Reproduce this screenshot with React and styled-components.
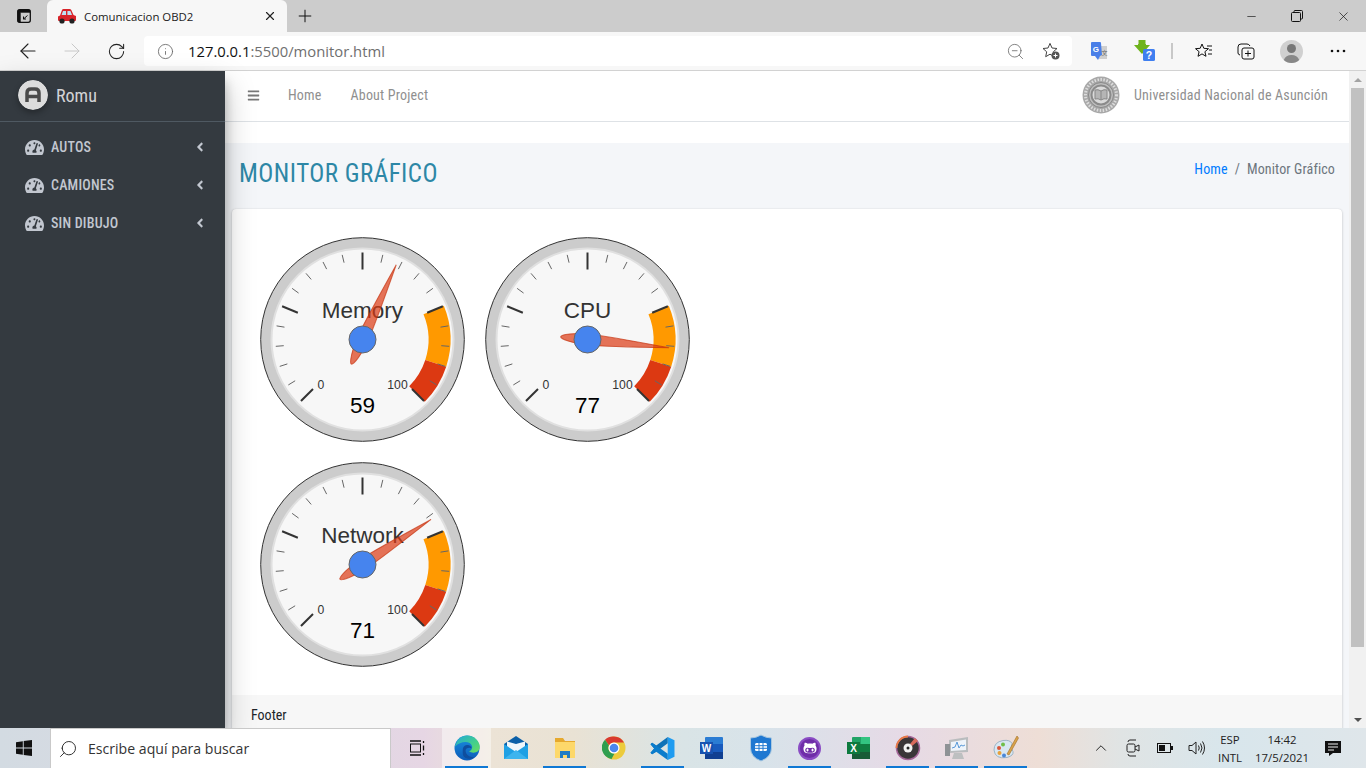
import React from "react";
import styled, { createGlobalStyle } from "styled-components";
import { FaTachometerAlt, FaAngleLeft, FaBars, FaGithubAlt } from "react-icons/fa";
import { ArrowLeft, ArrowRight, RotateCw, Info, ZoomOut, Plus, X, Minus, ChevronUp, Search } from "lucide-react";

const Global = createGlobalStyle`
  html, body { margin: 0; padding: 0; height: 100%; overflow: hidden; background: #fff; }
  #root { height: 100%; }
  * { box-sizing: border-box; }
`;

const cond = `font-family: Roboto, "Liberation Sans", sans-serif; font-stretch: 75%;`;

const Screen = styled.div`
  width: 1366px; height: 768px; display: flex; flex-direction: column; overflow: hidden;
  font-family: "Open Sans", sans-serif;
`;

/* browser chrome */
const TabStrip = styled.div`
  height: 32px; background: #cccccc; display: flex; align-items: stretch; flex: none;
`;
const TabActions = styled.div`
  width: 47px; display: flex; align-items: center; justify-content: center;
`;
const Tab = styled.div`
  width: 240px; background: #f7f7f7; border-radius: 6px 6px 0 0; display: flex; align-items: center;
  padding: 0 10px 0 10px; gap: 7px; font-size: 11.4px; color: #222;
`;
const TabTitle = styled.span` flex: 1; white-space: nowrap; `;
const NewTab = styled.div`
  width: 36px; display: flex; align-items: center; justify-content: center;
`;
const WindowControls = styled.div`
  margin-left: auto; display: flex; align-items: center;
`;
const WinBtn = styled.div`
  width: 46px; height: 30px; display: flex; align-items: center; justify-content: center; color: #111;
`;
const Toolbar = styled.div`
  height: 39px; background: #f7f7f7; border-bottom: 1px solid #d2d2d2; display: flex; align-items: center; flex: none;
  padding: 0 0 0 6px;
`;
const NavBtn = styled.div`
  width: 44px; height: 32px; display: flex; align-items: center; justify-content: center;
  color: ${(p) => (p.$off ? "#c8c8c8" : "#222")};
`;
const Address = styled.div`
  margin-left: 6px; width: 928px; height: 30px; background: #fff; border-radius: 4px; display: flex; align-items: center;
  padding: 0 3px 0 13px; font-family: "Open Sans", sans-serif; font-size: 14.8px; color: #111;
`;
const Url = styled.span`
  margin-left: 14px; flex: 1;
  em { font-style: normal; color: #6f6f6f; }
`;
const AddrIcon = styled.span`
  display: flex; align-items: center; justify-content: center; width: 36px; color: #666;
`;
const Extensions = styled.div`
  display: flex; align-items: center; flex: 1; padding-left: 3px;
`;
const Ext = styled.div`
  width: ${(p) => p.$w || 46}px; display: flex; align-items: center; justify-content: center; color: #111;
`;
const Sep = styled.div` width: 2px; height: 16px; background: #c8c8c8; margin: 0 11px 0 4px; `;

/* page */
const Page = styled.div` flex: 1; display: flex; min-height: 0; `;
const Sidebar = styled.aside`
  width: 225px; flex: none; background: #343a40; position: relative; z-index: 2;
  box-shadow: 0 14px 28px rgba(0,0,0,.25), 0 10px 10px rgba(0,0,0,.22);
  ${cond}
`;
const Brand = styled.div`
  height: 51px; border-bottom: 1px solid #4f5962; display: flex; align-items: center; padding: 0 0 1px 18px; gap: 8px;
  color: rgba(255,255,255,.8); font-size: 18px; font-weight: 400;
`;
const BrandLogo = styled.svg`
  width: 30px; height: 30px; border-radius: 50%; box-shadow: 0 3px 6px rgba(0,0,0,.3); flex: none; margin-bottom: 1px;
`;
const Menu = styled.nav` padding-top: 6px; `;
const MenuItem = styled.div`
  height: 38px; display: flex; align-items: center; padding: 0 18px 0 25px; color: #c2c7d0;
  font-size: 14px; font-weight: 500; letter-spacing: .2px;
  span { margin-left: 7px; flex: 1; }
`;
const Main = styled.main`
  flex: 1; min-width: 0; display: flex; flex-direction: column; background: #fff; overflow: hidden; ${cond}
`;
const Navbar = styled.header`
  height: 51px; flex: none; border-bottom: 1px solid #dee2e6; display: flex; align-items: center; padding: 0 21px 2px 22px;
  font-size: 14px; color: #8f8f8f; letter-spacing: .18px;
`;
const Burger = styled.span` display: flex; color: #777; margin-right: 28px; `;
const NavLink = styled.a` margin-right: 29px; `;
const Uni = styled.div` margin-left: auto; display: flex; align-items: center; gap: 14px; `;
const Content = styled.div`
  margin-top: 21px; flex: 1; min-height: 0; background: #f4f6f9; overflow: hidden;
`;
const PageHead = styled.div`
  height: 66px; display: flex; justify-content: space-between; align-items: center; padding: 0 14px 6px 14px;
`;
const Title = styled.h1`
  margin: 0; font-size: 25px; font-weight: 400; color: #2d87a6; letter-spacing: .47px;
`;
const Crumbs = styled.div`
  font-size: 14px; color: #6c757d; display: flex; gap: 7px; margin-top: -8px; letter-spacing: .12px;
  a { color: #007bff; }
`;
const Card = styled.section`
  margin: 0 7px; background: #fff; border-radius: 4px 4px 0 0; box-shadow: 0 0 1px rgba(0,0,0,.125), 0 1px 3px rgba(0,0,0,.2);
`;
const CardBody = styled.div`
  height: 486px; padding: 17.5px 17.5px 0;
`;
const GaugeGrid = styled.div`
  display: grid; grid-template-columns: repeat(2, 225px); grid-template-rows: repeat(2, 225px);
`;
const CardFooter = styled.div`
  height: 60px; background: #f7f7f7; padding: 12px 19px; font-size: 14px; color: #212529;
`;
const Scrollbar = styled.div`
  width: 17px; flex: none; background: #f1f1f1; display: flex; flex-direction: column; align-items: center; padding: 0 2px;
`;
const ScrollArrow = styled.div`
  height: 17px; flex: none; width: 100%; display: flex; align-items: center; justify-content: center;
  &::before {
    content: ""; border-left: 4px solid transparent; border-right: 4px solid transparent;
    ${(p) => (p.$down ? "border-top: 4px solid #505050;" : "border-bottom: 4px solid #a3a3a3;")}
  }
`;
const Thumb = styled.div` width: 100%; height: 559px; background: #c1c1c1; `;
const ScrollGap = styled.div` flex: 1; `;

/* taskbar */
const Taskbar = styled.footer`
  height: 40px; flex: none; display: flex; align-items: stretch; position: relative; z-index: 3;
  background: linear-gradient(90deg, #d3dbe2 0%, #dcd8e2 22%, #e6d6e4 31%, #ece3d6 36%, #e9e2d4 42%, #d9e4e6 50%, #d8e3ea 56%, #e6dae6 66%, #eeded6 76%, #e0e4e4 82%, #d8e6ec 90%, #dfe6ea 100%);
`;
const StartBtn = styled.div` width: 50px; display: flex; align-items: center; justify-content: center; padding-right: 2px; `;
const SearchBox = styled.div`
  width: 341px; background: #fff; display: flex; align-items: center; padding-left: 7px; gap: 10px;
  font-size: 14.1px; font-family: "Open Sans", sans-serif; color: #333; border: 1px solid #c9c9c9; border-width: 1px 1px 0;
`;
const MirrorIcon = styled.span` display: flex; transform: scaleX(-1); `;
const TaskView = styled.div` width: 51px; display: flex; align-items: center; justify-content: center; `;
const TaskIcon = styled.div`
  width: 49px; display: flex; align-items: center; justify-content: center; position: relative;
  background: ${(p) => (p.$focus ? "rgba(255,255,255,.45)" : "transparent")};
  &::after {
    content: ""; position: absolute; left: 3px; right: 3px; bottom: 0; height: 2px;
    background: ${(p) => (p.$open ? "#0f78d4" : "transparent")};
  }
`;
const Tray = styled.div`
  margin-left: auto; display: flex; align-items: center; color: #222; padding-right: 17px;
`;
const TrayIcon = styled.div` width: 32px; display: flex; align-items: center; justify-content: center; `;
const TrayText = styled.div`
  display: flex; flex-direction: column; align-items: center; gap: 3px; font-size: 11.4px; line-height: 15px; color: #222;
  font-family: "Open Sans", sans-serif; width: ${(p) => p.$w}px;
`;
const Notify = styled.div` width: 32px; display: flex; justify-content: center; `;

/* gauge */
const polar = (r, deg) => {
  const a = ((deg - 90) * Math.PI) / 180;
  return [112.5 + r * Math.cos(a), 112.5 + r * Math.sin(a)];
};
const angle = (v) => -135 + 2.7 * v;
const sector = (a, b, r1, r2) => {
  const [x1, y1] = polar(r2, a), [x2, y2] = polar(r2, b), [x3, y3] = polar(r1, b), [x4, y4] = polar(r1, a);
  return `M${x1} ${y1}A${r2} ${r2} 0 0 1 ${x2} ${y2}L${x3} ${y3}A${r1} ${r1} 0 0 0 ${x4} ${y4}Z`;
};
const GaugeSvg = styled.svg` display: block; width: 225px; height: 225px; font-family: "Liberation Sans", Arial, sans-serif; `;

function Gauge({ label, value, needle }) {
  const ticks = [];
  for (let i = 0; i <= 20; i++) {
    const major = i % 5 === 0;
    const d = angle(i * 5);
    const [x1, y1] = polar(major ? 70 : 79, d), [x2, y2] = polar(87, d);
    ticks.push(<line key={i} x1={x1} y1={y1} x2={x2} y2={y2} stroke={major ? "#333" : "#666"} strokeWidth={major ? 2 : 1} />);
  }
  return (
    <GaugeSvg viewBox="0 0 225 225">
      <circle cx="112.5" cy="112.5" r="101.8" fill="#ccc" stroke="#333" strokeWidth="1" />
      <circle cx="112.5" cy="112.5" r="91" fill="#f7f7f7" stroke="#e0e0e0" strokeWidth="2" />
      <path d={sector(angle(75), angle(90), 66, 88)} fill="#ff9900" />
      <path d={sector(angle(90), angle(100), 66, 88)} fill="#dc3912" />
      {ticks}
      <text x="112.5" y="90.5" textAnchor="middle" fontSize="22.5" fill="#333">{label}</text>
      <text x="71" y="162" textAnchor="middle" fontSize="12.2" fill="#333">0</text>
      <text x="147.5" y="162" textAnchor="middle" fontSize="12.2" fill="#333">100</text>
      <text x="112.5" y="185.5" textAnchor="middle" fontSize="22.5" fill="#000">{value}</text>
      <g transform={`rotate(${angle(needle)} 112.5 112.5)`}>
        <path d="M112.5 30.5C115 60 118 100 118 112.5C118 125 115 139.500 112.5 139.500C110 139.500 107 125 107 112.5C107 100 110 60 112.5 30.5Z" fill="#dc3912" fillOpacity=".7" stroke="#c63310" strokeWidth="1" strokeOpacity=".7" />
      </g>
      <circle cx="112.5" cy="112.5" r="13.5" fill="#4684ee" stroke="#666" strokeWidth="1" />
    </GaugeSvg>
  );
}

const Car = () => (
  <svg width="20" height="18" viewBox="0 0 20 18">
    <path d="M1 13V9.500l2-1 2-5.500q.4-1 1.500-1h6q1.200 0 1.800 1l2.200 5 2.500 1V13q0 1-1 1H2q-1 0-1-1Z" fill="#d8232a" />
    <path d="M6 4h3v4H4.600ZM10.400 4h3l1.600 4h-4.600Z" fill="#bfe0f2" />
    <circle cx="5" cy="14" r="2.600" fill="#222" /><circle cx="15" cy="14" r="2.600" fill="#222" />
  </svg>
);
const TabsIcon = () => (
  <svg width="16" height="16" viewBox="0 0 16 16" fill="none" stroke="#111" strokeWidth="1.300">
    <rect x="1.700" y="1.700" width="12.600" height="12.600" rx="2" />
    <path d="M2 2h12v2.500H4.500V14H2Z" fill="#111" strokeWidth=".4" />
    <path d="M11.500 7.500 7.500 11M7.500 8.500V11H10" strokeWidth="1" />
  </svg>
);
const RestoreIcon = () => (
  <svg width="12" height="12" viewBox="0 0 12 12" fill="none" stroke="#111"><rect x=".5" y="2.500" width="9" height="9" rx="1" /><path d="M3 2.500V1.500q0-1 1-1h6.500q1 0 1 1V8q0 1-1 1h-1" /></svg>
);
const StarPlus = () => (
  <svg width="20" height="20" viewBox="0 0 20 20"><path d="M9 2.400 11 7l5 .5-3.700 3.300 1 4.900L9 13.200 4.700 15.700l1-4.900L2 7.500 7 7Z" fill="none" stroke="#444" /><circle cx="14.500" cy="14.500" r="4" fill="#555" /><path d="M12.500 14.500h4M14.500 12.500v4" stroke="#fff" /></svg>
);
const Translate = () => (
  <svg width="18" height="20" viewBox="0 0 18 20"><path d="M8 5h9v13H9Z" fill="#cfcfcf" /><path d="M1 2q0-1 1-1h8q1 0 1 1l1 12-2 1-2 4-3-4H2q-1 0-1-1Z" fill="#4a7fe8" /><text x="2.800" y="11" fontSize="8" fontWeight="700" fill="#fff" fontFamily="Liberation Sans">G</text><text x="11.500" y="14" fontSize="6" fill="#666" fontFamily="Noto Sans CJK SC">文</text></svg>
);
const Download = () => (
  <svg width="24" height="24" viewBox="0 0 24 24"><path d="M1 6h4V1h8v5h4l-8 9Z" fill="#6fb31c" /><path d="M5 1v4M13 1v4" stroke="#f7f7f7" strokeWidth="1" /><rect x="10" y="10" width="12" height="12" rx="1.500" fill="#3f7ff0" /><text x="16" y="20" textAnchor="middle" fontSize="10.500" fontWeight="700" fill="#fff" fontFamily="Liberation Sans">?</text></svg>
);
const Favorites = () => (
  <svg width="20" height="20" viewBox="0 0 20 20" fill="none" stroke="#111"><path d="M8 3l1.800 4.300 4.700.4-3.600 3 1.100 4.600L8 12.900l-4 2.400 1.100-4.600-3.600-3 4.700-.4Z" /><path d="M13 5h5M15 9h3M14 13h4" /></svg>
);
const Collections = () => (
  <svg width="20" height="20" viewBox="0 0 20 20" fill="none" stroke="#111"><path d="M4 14q-2-.5-2-2V6q0-3 3-3h6q2 0 3 2" /><rect x="6" y="7" width="12" height="11" rx="2" /><path d="M12 9.500v6M9 12.500h6" /></svg>
);
const Avatar = () => (
  <svg width="23" height="23" viewBox="0 0 23 23"><circle cx="11.500" cy="11.500" r="11.500" fill="#d0d0d0" /><circle cx="11.500" cy="8.500" r="4.500" fill="#777" /><path d="M3.800 20q2-5 7.700-5t7.700 5q-3 3-7.700 3t-7.700-3Z" fill="#888" /></svg>
);
const Dots = () => (
  <svg width="16" height="4" viewBox="0 0 16 4" fill="#111"><circle cx="2" cy="2" r="1.300" /><circle cx="8" cy="2" r="1.300" /><circle cx="14" cy="2" r="1.300" /></svg>
);
const Seal = () => (
  <svg width="38" height="38" viewBox="0 0 38 38">
    <circle cx="19" cy="19" r="18.500" fill="#a8a8a8" />
    <circle cx="19" cy="19" r="15.500" fill="none" stroke="#dcdcdc" strokeWidth="3" strokeDasharray="1.500 1.500" />
    <circle cx="19" cy="19" r="12.500" fill="#bcbcbc" stroke="#888" />
    <circle cx="19" cy="19" r="9.500" fill="#dadada" stroke="#8a8a8a" strokeWidth="2" />
    <path d="M13 14q3-1 6 1 3-2 6-1v9q-3-1-6 1-3-2-6-1ZM19 15v9" fill="#b5b5b5" stroke="#888" />
  </svg>
);

const WinLogo = () => (
  <svg width="16" height="16" viewBox="0 0 16 16" fill="#111"><path d="M0 2.200 6.800 1.200V7.500H0ZM7.700 1.100 16 0V7.500H7.700ZM0 8.400H6.800V14.800L0 13.800ZM7.700 8.400H16V16L7.700 14.900Z" /></svg>
);
const TaskViewIcon = () => (
  <svg width="16" height="18" viewBox="0 0 16 18" fill="none" stroke="#111"><rect x="1.500" y="5" width="10" height="8" /><path d="M1 2h11M1 16h11M14.500 2v2M14.500 6.500v5M14.500 14v2" strokeWidth="1.300" /></svg>
);
const Edge = () => (
  <svg width="26" height="26" viewBox="0 0 26 26">
    <defs>
      <linearGradient id="eg1" x1="0" y1="0" x2="1" y2="1"><stop offset="0" stopColor="#22a8d8" /><stop offset=".6" stopColor="#43cf8c" /><stop offset="1" stopColor="#6bdc5e" /></linearGradient>
      <linearGradient id="eg2" x1="0" y1="0" x2="0" y2="1"><stop offset="0" stopColor="#1a90e0" /><stop offset="1" stopColor="#0c5bb8" /></linearGradient>
    </defs>
    <circle cx="13" cy="13" r="12.500" fill="url(#eg2)" />
    <path d="M1 11Q4 .5 13 .5q9 0 12.500 9 1 6-3 7.500-4 1.500-7.500-.5 4-2 3-5.500-1.500-4-6.500-4-6 0-10.500 4.500Z" fill="url(#eg1)" />
    <path d="M9 13q1.500-3.500 5-3 3.500.8 3.500 3.500-1.500-1-3.500-.5-3.500.8-2 5 2 4 8.500 4.500-3 1.800-6.500 1.200-5.500-1-5.300-6.500 0-2.500.3-4.200Z" fill="#0f4e9e" />
  </svg>
);
const Mail = () => (
  <svg width="26" height="26" viewBox="0 0 26 26"><path d="M1 9 13 1l12 8v15H1Z" fill="#0a5fa8" /><path d="M4 6.500 13 9l9-2.500V16H4Z" fill="#eef6fb" /><path d="M1 9l12 8 12-8v15H1Z" fill="#1fa0e4" /><path d="M1 24 13 15l12 9Z" fill="#3db4ee" /></svg>
);
const Folder = () => (
  <svg width="24" height="24" viewBox="0 0 24 24"><path d="M2 2h8l2 3h10v17H2Z" fill="#e6a92e" /><path d="M2 6h20v16H2Z" fill="#fdd86a" /><path d="M7 15h10v7h-3v-3h-4v3H7Z" fill="#1f7cc4" /></svg>
);
const Chrome = () => (
  <svg width="24" height="26" viewBox="0 0 24 24"><circle cx="12" cy="12" r="11.500" fill="#eccb3c" /><path d="M12 .5A11.500 11.500 0 0 1 22 6.500H12a5.500 5.500 0 0 0-5 3L3 3.700A11.500 11.500 0 0 1 12 .5Z" fill="#d93a2f" /><path d="M3 3.700 7 9.500a5.500 5.500 0 0 0 5.500 8L9.500 23A11.500 11.500 0 0 1 3 3.700Z" fill="#2f9e4f" /><circle cx="12" cy="12" r="5.500" fill="#fff" /><circle cx="12" cy="12" r="4.300" fill="#4a87ec" /></svg>
);
const VSCode = () => (
  <svg width="25" height="25" viewBox="0 0 24 24"><path d="M17 1 23.500 4v16L17 23Z" fill="#1f9cf0" /><path d="M17 1v6L6 15l-4 2.500L.5 16 4 12 .5 8 2 6.500 6 9Z" fill="#0e72b8" /><path d="M17 23v-6L6 9 2 6.500.5 8 4 12 .5 16 2 17.500 6 15Z" fill="#0a7ccc" /></svg>
);
const Word = () => (
  <svg width="25" height="24" viewBox="0 0 25 24"><rect x="6" y="1" width="18" height="22" rx="1" fill="#2b7cd3" /><path d="M6 8h18v8H6Z" fill="#185abd" /><path d="M6 16h18v7H6Z" fill="#103f91" /><rect x="1" y="6" width="13" height="12" fill="#1752b0" /><text x="7.500" y="16" textAnchor="middle" fontSize="10" fontWeight="700" fill="#fff" fontFamily="Liberation Sans">W</text></svg>
);
const Shield = () => (
  <svg width="24" height="28" viewBox="0 0 24 28"><path d="M12 1q5 3 10.500 3v10q0 9-10.500 13Q1.500 23 1.500 14V4Q7 4 12 1Z" fill="#1f78d1" stroke="#a9c8e0" /><rect x="6" y="9" width="12" height="8" rx="1.500" fill="#fff" /><path d="M6 11.700h12M6 14.300h12M10 9v8M14 9v8" stroke="#1f78d1" /></svg>
);
const GhCircle = styled.span`
  width: 23px; height: 23px; border-radius: 50%; background: #6f2da8; border: 2px solid #8a4cc4; display: flex; align-items: center; justify-content: center;
`;
const GithubDesk = () => (
  <GhCircle><FaGithubAlt size={14} color="#fff" /></GhCircle>
);
const Excel = () => (
  <svg width="25" height="24" viewBox="0 0 25 24"><rect x="6" y="1" width="18" height="22" rx="1" fill="#21a366" /><path d="M15 1h9v7h-9Z" fill="#33c481" /><path d="M6 8h18v8H6Z" fill="#107c41" /><path d="M6 16h18v7H6Z" fill="#185c37" /><rect x="1" y="6" width="13" height="12" fill="#0e7a3e" /><text x="7.500" y="16" textAnchor="middle" fontSize="10" fontWeight="700" fill="#fff" fontFamily="Liberation Sans">X</text></svg>
);
const Music = () => (
  <svg width="26" height="26" viewBox="0 0 26 26"><circle cx="13" cy="13" r="11.500" fill="#3a3638" stroke="#a5679a" strokeWidth="1.500" /><path d="M13 1.500a11.500 11.500 0 0 0-11.500 11.500" fill="none" stroke="#e87a45" strokeWidth="1.800" /><path d="M20 3 15 9l2 2 6-5Z" fill="#d96b5c" /><circle cx="13" cy="13" r="4.500" fill="#f2f2f2" /><circle cx="13" cy="13" r="1.500" fill="#222" /></svg>
);
const Monitor = () => (
  <svg width="26" height="26" viewBox="0 0 26 26"><path d="M5 5l19-3v15L5 18Z" fill="#b9bcbe" /><path d="M7 7l15-2.500v10.500L7 16Z" fill="#eef4fa" /><path d="M8 13l3-1 2-5 2 6 2-3 2 1 2-1" fill="none" stroke="#5a9ad8" /><path d="M10 18h8l2 6H8Z" fill="#bdbfc0" /><rect x="1" y="9" width="5" height="12" fill="#8e9295" /></svg>
);
const Paint = () => (
  <svg width="28" height="28" viewBox="0 0 28 28"><path d="M2 16q0-8 9-9.500 7-1 9 3-2 5 1 8 1 4-6 6-12 2-13-7.500Z" fill="#d8e7f2" stroke="#9db4c6" /><circle cx="7" cy="14" r="2" fill="#d8553a" /><circle cx="11" cy="10.500" r="2" fill="#6fbf4a" /><circle cx="7.500" cy="19" r="2" fill="#e8a03a" /><circle cx="12" cy="21.500" r="2" fill="#4a87d8" /><path d="M25 2 15 20l2 1L26.500 4Z" fill="#d9a24a" stroke="#a06e28" strokeWidth=".6" /></svg>
);
const MeetNow = () => (
  <svg width="16" height="20" viewBox="0 0 16 20" fill="none" stroke="#222"><path d="M3 4q0-2 2-2h6M3 16q0 2 2 2h6" /><rect x="2" y="6" width="8" height="8" rx="1.500" /><path d="M10 9l4-2v6l-4-2" /></svg>
);
const Battery = () => (
  <svg width="16" height="10" viewBox="0 0 16 10"><rect x=".5" y=".5" width="13" height="9" fill="none" stroke="#111" /><rect x="2" y="2" width="6" height="6" fill="#111" /><rect x="14" y="3" width="2" height="4" fill="#111" /></svg>
);
const Volume = () => (
  <svg width="18" height="16" viewBox="0 0 18 16" fill="none" stroke="#222"><path d="M1 5.500h3L8 2v12l-4-3.500H1Z" /><path d="M10.500 5.500q1.500 2.500 0 5M12.500 3.500q3 4.500 0 9M14.500 1.500q4 6.500 0 13" /></svg>
);
const NotifyIcon = () => (
  <svg width="16" height="16" viewBox="0 0 16 16"><path d="M0 1h16v12H8l-4 3v-3H0Z" fill="#111" /><path d="M3 4h10M3 7h10M3 10h6" stroke="#eee" /></svg>
);

export default function App() {
  return (
    <Screen>
      <Global />
      <TabStrip>
        <TabActions><TabsIcon /></TabActions>
        <Tab>
          <Car />
          <TabTitle>Comunicacion OBD2</TabTitle>
          <X size={14} color="#222" strokeWidth={2} />
        </Tab>
        <NewTab><Plus size={20} color="#111" strokeWidth={1.2} /></NewTab>
        <WindowControls>
          <WinBtn><Minus size={13} strokeWidth={1.2} /></WinBtn>
          <WinBtn><RestoreIcon /></WinBtn>
          <WinBtn><X size={15} strokeWidth={1.1} /></WinBtn>
        </WindowControls>
      </TabStrip>
      <Toolbar>
        <NavBtn><ArrowLeft size={24} strokeWidth={1.1} /></NavBtn>
        <NavBtn $off><ArrowRight size={24} strokeWidth={1} /></NavBtn>
        <NavBtn><RotateCw size={19} strokeWidth={1.3} /></NavBtn>
        <Address>
          <Info size={17} color="#666" strokeWidth={1.2} />
          <Url>127.0.0.1<em>:5500/monitor.html</em></Url>
          <AddrIcon><ZoomOut size={19} strokeWidth={1} /></AddrIcon>
          <AddrIcon><StarPlus /></AddrIcon>
        </Address>
        <Extensions>
          <Ext $w={48}><Translate /></Ext>
          <Ext $w={44}><Download /></Ext>
          <Sep />
          <Ext $w={39}><Favorites /></Ext>
          <Ext $w={45}><Collections /></Ext>
          <Ext $w={47}><Avatar /></Ext>
          <Ext><Dots /></Ext>
        </Extensions>
      </Toolbar>
      <Page>
        <Sidebar>
          <Brand>
            <BrandLogo viewBox="0 0 30 30">
              <circle cx="15" cy="15" r="15" fill="#dcdcdc" />
              <path d="M9 22V13q0-4 4-4h4q4 0 4 4v9M9 16.500h12" fill="none" stroke="#4a4a4a" strokeWidth="3.500" />
            </BrandLogo>
            Romu
          </Brand>
          <Menu>
            {["AUTOS", "CAMIONES", "SIN DIBUJO"].map((m) => (
              <MenuItem key={m}>
                <FaTachometerAlt size={19} />
                <span>{m}</span>
                <FaAngleLeft size={14} />
              </MenuItem>
            ))}
          </Menu>
        </Sidebar>
        <Main>
          <Navbar>
            <Burger><FaBars size={13} /></Burger>
            <NavLink>Home</NavLink>
            <NavLink>About Project</NavLink>
            <Uni><Seal />Universidad Nacional de Asunción</Uni>
          </Navbar>
          <Content>
            <PageHead>
              <Title>MONITOR GRÁFICO</Title>
              <Crumbs><a>Home</a><span>/</span><span>Monitor Gráfico</span></Crumbs>
            </PageHead>
            <Card>
              <CardBody>
                <GaugeGrid>
                  <Gauge label="Memory" value={59} needle={59} />
                  <Gauge label="CPU" value={77} needle={85.5} />
                  <Gauge label="Network" value={71} needle={71} />
                </GaugeGrid>
              </CardBody>
              <CardFooter>Footer</CardFooter>
            </Card>
          </Content>
        </Main>
        <Scrollbar>
          <ScrollArrow />
          <Thumb />
          <ScrollGap />
          <ScrollArrow $down />
        </Scrollbar>
      </Page>
      <Taskbar>
        <StartBtn><WinLogo /></StartBtn>
        <SearchBox><MirrorIcon><Search size={20} strokeWidth={1.1} color="#222" /></MirrorIcon>Escribe aquí para buscar</SearchBox>
        <TaskView><TaskViewIcon /></TaskView>
        <TaskIcon $focus $open><Edge /></TaskIcon>
        <TaskIcon><Mail /></TaskIcon>
        <TaskIcon $open><Folder /></TaskIcon>
        <TaskIcon><Chrome /></TaskIcon>
        <TaskIcon $open><VSCode /></TaskIcon>
        <TaskIcon><Word /></TaskIcon>
        <TaskIcon><Shield /></TaskIcon>
        <TaskIcon $open><GithubDesk /></TaskIcon>
        <TaskIcon><Excel /></TaskIcon>
        <TaskIcon $open><Music /></TaskIcon>
        <TaskIcon $open><Monitor /></TaskIcon>
        <TaskIcon $open><Paint /></TaskIcon>
        <Tray>
          <TrayIcon><ChevronUp size={18} strokeWidth={1.3} /></TrayIcon>
          <TrayIcon><MeetNow /></TrayIcon>
          <TrayIcon><Battery /></TrayIcon>
          <TrayIcon><Volume /></TrayIcon>
          <TrayText $w={34}><span>ESP</span><span>INTL</span></TrayText>
          <TrayText $w={70}><span>14:42</span><span>17/5/2021</span></TrayText>
          <Notify><NotifyIcon /></Notify>
        </Tray>
      </Taskbar>
    </Screen>
  );
}
